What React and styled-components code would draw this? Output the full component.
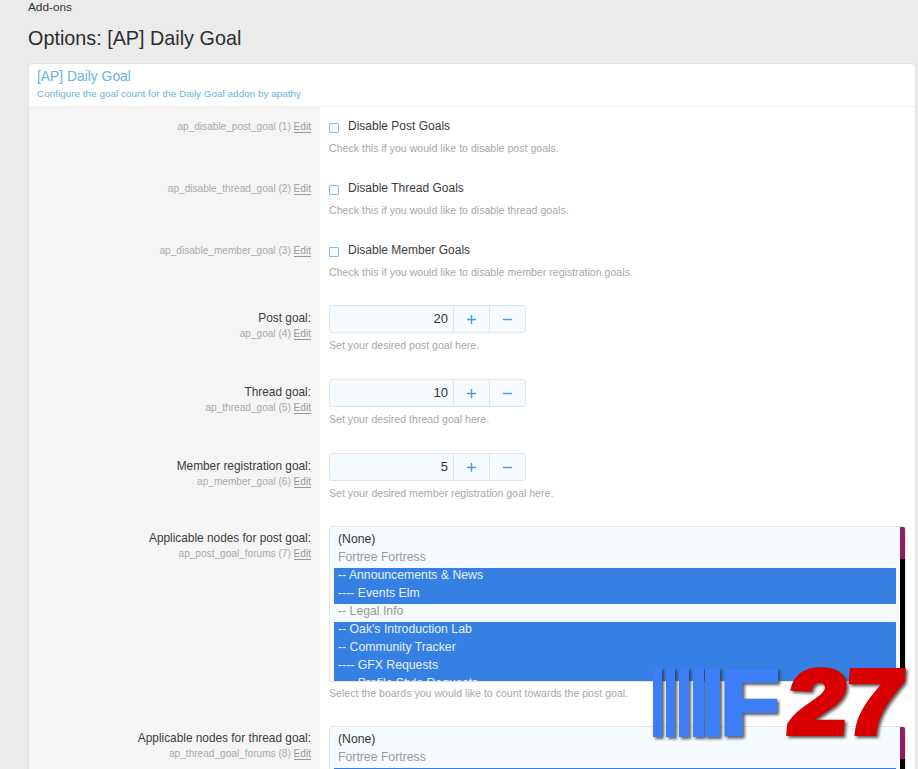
import React from 'react';
import styled, { createGlobalStyle } from 'styled-components';

const GlobalStyle = createGlobalStyle`
  html, body {
    margin: 0;
    height: 769px;
    overflow: hidden;
    background: #ebebeb;
    font-family: "Liberation Sans", Arial, sans-serif;
  }
`;

const Page = styled.div`
  position: relative;
  height: 769px;
  padding: 0 2px 0 28px;
  overflow: hidden;
`;

const Crumb = styled.div`
  font-size: 11.8px;
  line-height: 14px;
  color: #333;
`;

const Title = styled.h1`
  margin: 12px 0 13px;
  font-size: 19.8px;
  line-height: 24px;
  font-weight: 400;
  color: #2d2d2d;
`;

const Card = styled.div`
  border: 1px solid #e0e0e0;
  border-radius: 4px 4px 0 0;
  background: #fff;
  overflow: hidden;
`;

const CardHeader = styled.div`
  height: 43px;
  padding: 4px 8px 0;
  box-sizing: border-box;
  border-bottom: 1px solid #f0f0f0;
`;

const CardTitle = styled.div`
  font-size: 13.85px;
  line-height: 17px;
  color: #6cb2dd;
`;

const CardSubtitle = styled.div`
  margin-top: 2px;
  font-size: 9.95px;
  line-height: 13px;
  color: #6cb2dd;
`;

const Row = styled.div`
  display: grid;
  grid-template-columns: 291px 1fr;
  height: ${(p) => p.$height}px;
`;

const LabelCell = styled.div`
  background: #f5f5f5;
  padding: ${(p) => p.$top}px 9px 0 0;
  text-align: right;
`;

const FieldCell = styled.div`
  padding: ${(p) => p.$top}px 9px 0 9px;
`;

const Label = styled.div`
  margin-bottom: 1px;
  font-size: 11.85px;
  line-height: 15px;
  color: #3c3c3c;
`;

const OptionName = styled.div`
  font-size: 10.1px;
  line-height: 13px;
  color: #aaa;
`;

const EditLink = styled.span`
  color: #999;
  border-bottom: 1px solid #999;
`;

const CheckLine = styled.div`
  display: flex;
  align-items: center;
  gap: 8px;
  font-size: 12px;
  line-height: 15px;
  color: #3c3c3c;
`;

const CheckBox = styled.span`
  width: 8px;
  height: 8px;
  flex: none;
  margin: 3px 1px 0 0;
  border: 1.5px solid #7fbce6;
  border-radius: 1px;
  background: #f7fbff;
`;

const Hint = styled.div`
  margin-top: ${(p) => p.$gap}px;
  font-size: 10.6px;
  line-height: 13px;
  color: #a8a8a8;
`;

const Spinner = styled.div`
  display: flex;
  width: 197px;
  height: 28px;
  box-sizing: border-box;
  border: 1px solid #e1e4e8;
  border-radius: 3px;
  background: #f6fbff;
`;

const SpinnerValue = styled.div`
  flex: 1;
  padding: 5px 5px 0 0;
  font-size: 13px;
  line-height: 16px;
  text-align: right;
  color: #333;
`;

const SpinnerButton = styled.div`
  width: 36px;
  box-sizing: border-box;
  display: flex;
  align-items: center;
  justify-content: center;
  border-left: 1px solid #e1e4e8;
  color: #4a9bd8;
`;

const ListBox = styled.div`
  position: relative;
  height: ${(p) => p.$height}px;
  box-sizing: border-box;
  padding: 5px 9px 0 4px;
  border: 1px solid #e4e4e4;
  border-radius: 3px 3px 0 0;
  background: #f6fbff;
  overflow: hidden;
`;

const ListItem = styled.div`
  height: 18px;
  padding-left: 4px;
  font-size: 12.25px;
  line-height: 14px;
  white-space: nowrap;
  color: ${(p) => (p.$selected ? '#e8f2fc' : p.$dark ? '#333' : '#999')};
  background: ${(p) => (p.$selected ? '#3680e4' : 'transparent')};
`;

const ListScroll = styled.div`
  position: absolute;
  top: 0;
  right: 0;
  bottom: 0;
  width: 5px;
  background: linear-gradient(#8f1f62 0 32px, #000 32px);
`;

const Logo = styled.div`
  position: absolute;
  left: 653px;
  top: 668px;
  display: flex;
  width: 260px;
  height: 71px;
  filter: drop-shadow(2px 2px 1.5px rgba(50, 50, 50, 0.8));
`;

const LogoStripe = styled.span`
  width: ${(p) => p.$width}px;
  height: 69px;
  margin-right: ${(p) => p.$gap}px;
  background: #3d7df5;
`;

const LogoLetter = styled.span`
  display: inline-block;
  height: 69px;
  font-family: "Liberation Sans", Arial, sans-serif;
  font-weight: 700;
  font-size: ${(p) => p.$size}px;
  line-height: 69px;
  letter-spacing: -1px;
  -webkit-text-stroke: ${(p) => p.$stroke}px ${(p) => p.$color};
  color: ${(p) => p.$color};
  margin-left: ${(p) => p.$left}px;
  transform: ${(p) => p.$transform};
  transform-origin: left center;
`;

const stripes = [
  [9, 4],
  [9, 4],
  [10, 4],
  [11, 1],
  [15, 4],
];

const OptionLabel = ({ label, name, index }) => (
  <>
    {label && <Label>{label}:</Label>}
    <OptionName>
      {name} ({index}) <EditLink>Edit</EditLink>
    </OptionName>
  </>
);

const CheckRow = ({ name, index, text, hint, height }) => (
  <Row $height={height}>
    <LabelCell $top={13}>
      <OptionLabel name={name} index={index} />
    </LabelCell>
    <FieldCell $top={12}>
      <CheckLine>
        <CheckBox />
        {text}
      </CheckLine>
      <Hint $gap={8}>{hint}</Hint>
    </FieldCell>
  </Row>
);

const SpinRow = ({ label, name, index, value, hint, height, top }) => (
  <Row $height={height}>
    <LabelCell $top={top + 6}>
      <OptionLabel label={label} name={name} index={index} />
    </LabelCell>
    <FieldCell $top={top}>
      <Spinner>
        <SpinnerValue>{value}</SpinnerValue>
        <SpinnerButton>
          <svg width="11" height="11" viewBox="0 0 11 11">
            <path d="M5.5 1v9M1 5.5h9" stroke="currentColor" strokeWidth="1.4" />
          </svg>
        </SpinnerButton>
        <SpinnerButton>
          <svg width="11" height="11" viewBox="0 0 11 11">
            <path d="M1 5.5h9" stroke="currentColor" strokeWidth="1.4" />
          </svg>
        </SpinnerButton>
      </Spinner>
      <Hint $gap={6}>{hint}</Hint>
    </FieldCell>
  </Row>
);

const postNodes = [
  { text: '(None)', dark: true },
  { text: 'Fortree Fortress' },
  { text: '-- Announcements & News', selected: true },
  { text: '---- Events Elm', selected: true },
  { text: '-- Legal Info' },
  { text: "-- Oak's Introduction Lab", selected: true },
  { text: '-- Community Tracker', selected: true },
  { text: '---- GFX Requests', selected: true },
  { text: '---- Profile Style Requests', selected: true },
];

const threadNodes = [
  { text: '(None)', dark: true },
  { text: 'Fortree Fortress' },
  { text: '-- Announcements & News', selected: true },
];

const ListRow = ({ label, name, index, nodes, hint, height, boxHeight, top }) => (
  <Row $height={height}>
    <LabelCell $top={top + 5}>
      <OptionLabel label={label} name={name} index={index} />
    </LabelCell>
    <FieldCell $top={top}>
      <ListBox $height={boxHeight}>
        {nodes.map((node) => (
          <ListItem key={node.text} $selected={node.selected} $dark={node.dark}>
            {node.text}
          </ListItem>
        ))}
        <ListScroll />
      </ListBox>
      {hint && <Hint $gap={5}>{hint}</Hint>}
    </FieldCell>
  </Row>
);

export default function App() {
  return (
    <Page>
      <GlobalStyle />
      <Crumb>Add-ons</Crumb>
      <Title>Options: [AP] Daily Goal</Title>
      <Card>
        <CardHeader>
          <CardTitle>[AP] Daily Goal</CardTitle>
          <CardSubtitle>Configure the goal count for the Daily Goal addon by apathy</CardSubtitle>
        </CardHeader>
        <CheckRow
          height={62}
          name="ap_disable_post_goal"
          index={1}
          text="Disable Post Goals"
          hint="Check this if you would like to disable post goals."
        />
        <CheckRow
          height={62}
          name="ap_disable_thread_goal"
          index={2}
          text="Disable Thread Goals"
          hint="Check this if you would like to disable thread goals."
        />
        <CheckRow
          height={67}
          name="ap_disable_member_goal"
          index={3}
          text="Disable Member Goals"
          hint="Check this if you would like to disable member registration goals."
        />
        <SpinRow
          height={74}
          top={7}
          label="Post goal"
          name="ap_goal"
          index={4}
          value="20"
          hint="Set your desired post goal here."
        />
        <SpinRow
          height={74}
          top={7}
          label="Thread goal"
          name="ap_thread_goal"
          index={5}
          value="10"
          hint="Set your desired thread goal here."
        />
        <SpinRow
          height={74}
          top={7}
          label="Member registration goal"
          name="ap_member_goal"
          index={6}
          value="5"
          hint="Set your desired member registration goal here."
        />
        <ListRow
          height={200}
          boxHeight={156}
          top={6}
          label="Applicable nodes for post goal"
          name="ap_post_goal_forums"
          index={7}
          nodes={postNodes}
          hint="Select the boards you would like to count towards the post goal."
        />
        <ListRow
          height={60}
          boxHeight={60}
          top={6}
          label="Applicable nodes for thread goal"
          name="ap_thread_goal_forums"
          index={8}
          nodes={threadNodes}
        />
      </Card>
      <Logo>
        {stripes.map(([width, gap], i) => (
          <LogoStripe key={i} $width={width} $gap={gap} />
        ))}
        <LogoLetter $color="#3d7df5" $size={92} $stroke={4} $left={-4} $transform="scaleX(1.06)">F</LogoLetter>
        <LogoLetter $color="#d80000" $size={90} $stroke={6} $left={14} $transform="skewX(-5deg) scaleX(1.16)">27</LogoLetter>
      </Logo>
    </Page>
  );
}
